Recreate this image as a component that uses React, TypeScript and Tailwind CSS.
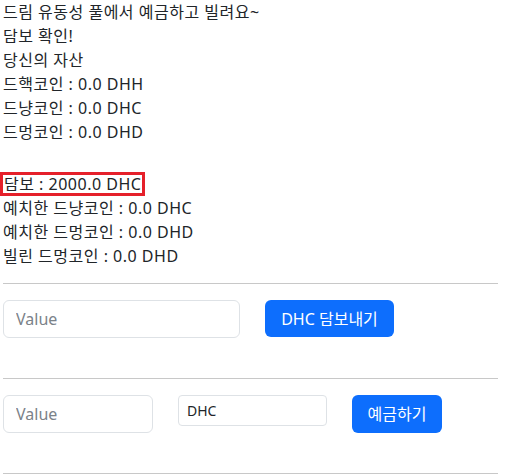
import React from "react";

export default function App() {
  return (
    <div className="bg-white text-[#212529] text-[16px] leading-6 pl-[3px] w-[498px] font-['Noto_Sans','Noto_Sans_CJK_KR',sans-serif]">
      <div className="tracking-[0.5px]">
        <div>드림 유동성 풀에서 예금하고 빌려요~</div>
        <div>담보 확인!</div>
        <div>당신의 자산</div>
        <div>드핵코인 : 0.0 DHH</div>
        <div>드냥코인 : 0.0 DHC</div>
        <div>드멍코인 : 0.0 DHD</div>

        <div className="mt-[28px] -ml-[3px] w-[145px] border-[3px] border-[#e5202a] pl-[1px] leading-[18px] whitespace-nowrap">
          담보 : 2000.0 DHC
        </div>
        <div>예치한 드냥코인 : 0.0 DHC</div>
        <div>예치한 드멍코인 : 0.0 DHD</div>
        <div>빌린 드멍코인 : 0.0 DHD</div>
      </div>

      <hr className="mt-[15px] mb-4 border-t border-[#c8c8c8]" />

      {/* collateral */}
      <div className="flex items-start gap-[25px] mb-[40px]">
        <input
          placeholder="Value"
          className="w-[237px] h-[38px] px-3 rounded-md border border-[#dee2e6] placeholder:text-[#7b8289] outline-none"
        />
        <button className="w-[129px] h-[37px] rounded-md bg-[#0d6efd] text-white">DHC 담보내기</button>
      </div>

      <hr className="mb-4 border-t border-[#c8c8c8]" />

      {/* deposit */}
      <div className="flex items-start gap-[25px] mb-[40px]">
        <input
          placeholder="Value"
          className="w-[150px] h-[38px] px-3 rounded-md border border-[#dee2e6] placeholder:text-[#7b8289] outline-none"
        />
        <input
          defaultValue="DHC"
          className="w-[149px] h-[31px] px-2 rounded-[4px] border border-[#dee2e6] text-[14px] outline-none"
        />
        <button className="w-[90px] h-[38px] rounded-md bg-[#0d6efd] text-white">예금하기</button>
      </div>

      <hr className="border-t border-[#c8c8c8]" />
    </div>
  );
}
